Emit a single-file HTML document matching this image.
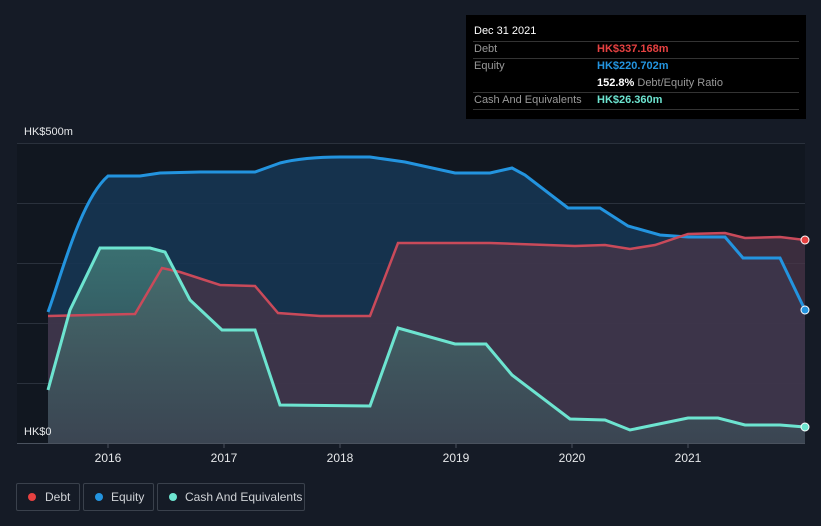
<html><body style="margin:0;width:821px;height:526px;background:#151b26;font-family:'Liberation Sans',sans-serif;overflow:hidden;position:relative">
<svg width="821" height="526" style="position:absolute;left:0;top:0">
<defs>
<linearGradient id="cg" x1="0" y1="0" x2="0" y2="1"><stop offset="0" stop-color="#4a8a80" stop-opacity="0.7"/><stop offset="1" stop-color="#3a5058" stop-opacity="0.6"/></linearGradient>
</defs>
<rect x="17" y="143" width="788" height="300" fill="#111720"/>
<g stroke="#2a313c" stroke-width="1">
<line x1="17" y1="143.5" x2="805" y2="143.5"/><line x1="17" y1="203.5" x2="805" y2="203.5"/><line x1="17" y1="263.5" x2="805" y2="263.5"/><line x1="17" y1="323.5" x2="805" y2="323.5"/><line x1="17" y1="383.5" x2="805" y2="383.5"/>
</g>
<path d="M48,312 C60,280 80,200 108,176 L140,176 L160,173 L200,172 L255,172 L280,163 C300,158 320,157 340,157 L370,157 L405,162 L455,173 L490,173 L512,168 L525,175 L568,208 L600,208 L628,226 L660,235 L688,237 L725,237 L743,258 L780,258 L805,310 L805,443 L48,443Z" fill="#163552" opacity="0.9"/>
<path d="M48,316 L135,314 L162,268 L180,272 L220,285 L255,286 L278,313 L320,316 L370,316 L398,243 L490,243 L575,246 L605,245 L630,249 L655,245 L688,234 L725,233 L745,238 L780,237 L805,240 L805,443 L48,443Z" fill="#4a3548" opacity="0.75"/>
<path d="M48,390 L70,310 L100,248 L150,248 L165,252 L190,300 L222,330 L255,330 L280,405 L370,406 L398,328 L455,344 L486,344 L512,375 L570,419 L605,420 L630,430 L688,418 L718,418 L745,425 L780,425 L805,427 L805,443 L48,443Z" fill="url(#cg)"/>
<path d="M48,312 C60,280 80,200 108,176 L140,176 L160,173 L200,172 L255,172 L280,163 C300,158 320,157 340,157 L370,157 L405,162 L455,173 L490,173 L512,168 L525,175 L568,208 L600,208 L628,226 L660,235 L688,237 L725,237 L743,258 L780,258 L805,310" fill="none" stroke="#2394df" stroke-width="3"/>
<path d="M48,316 L135,314 L162,268 L180,272 L220,285 L255,286 L278,313 L320,316 L370,316 L398,243 L490,243 L575,246 L605,245 L630,249 L655,245 L688,234 L725,233 L745,238 L780,237 L805,240" fill="none" stroke="#c94a5a" stroke-width="2.5"/>
<path d="M48,390 L70,310 L100,248 L150,248 L165,252 L190,300 L222,330 L255,330 L280,405 L370,406 L398,328 L455,344 L486,344 L512,375 L570,419 L605,420 L630,430 L688,418 L718,418 L745,425 L780,425 L805,427" fill="none" stroke="#6de4d0" stroke-width="3"/>
<circle cx="805" cy="240" r="4" fill="#e64141" stroke="#fff" stroke-width="1"/>
<circle cx="805" cy="310" r="4" fill="#2394df" stroke="#fff" stroke-width="1"/>
<circle cx="805" cy="427" r="4" fill="#6de4d0" stroke="#fff" stroke-width="1"/>
<line x1="17" y1="443.5" x2="805" y2="443.5" stroke="#4a525e"/>
<g stroke="#4a525e"><line x1="108" y1="443" x2="108" y2="448"/><line x1="224" y1="443" x2="224" y2="448"/><line x1="340" y1="443" x2="340" y2="448"/><line x1="456" y1="443" x2="456" y2="448"/><line x1="572" y1="443" x2="572" y2="448"/><line x1="688" y1="443" x2="688" y2="448"/></g>
<g fill="#e6e8ea" font-size="12" text-anchor="middle"><text x="108" y="462">2016</text><text x="224" y="462">2017</text><text x="340" y="462">2018</text><text x="456" y="462">2019</text><text x="572" y="462">2020</text><text x="688" y="462">2021</text></g>
<text x="24" y="135" fill="#e6e8ea" font-size="11">HK$500m</text>
<text x="24" y="435" fill="#e6e8ea" font-size="11">HK$0</text>
</svg>
<div style="position:absolute;left:466px;top:15px;width:340px;height:104px;background:#000;font-size:11px;color:#fff">
<div style="position:absolute;left:8px;top:10px;font-size:11px">Dec 31 2021</div>
<div style="position:absolute;left:7px;right:7px;top:26px;border-top:1px solid #333"></div>
<div style="position:absolute;left:8px;top:28px;color:#999">Debt</div><div style="position:absolute;left:131px;top:28px;color:#e64141;font-weight:bold">HK$337.168m</div>
<div style="position:absolute;left:7px;right:7px;top:43px;border-top:1px solid #333"></div>
<div style="position:absolute;left:8px;top:45px;color:#999">Equity</div><div style="position:absolute;left:131px;top:45px;color:#2394df;font-weight:bold">HK$220.702m</div>
<div style="position:absolute;left:131px;top:62px;color:#999"><b style="color:#fff">152.8%</b> Debt/Equity Ratio</div>
<div style="position:absolute;left:7px;right:7px;top:77px;border-top:1px solid #333"></div>
<div style="position:absolute;left:8px;top:79px;color:#999">Cash And Equivalents</div><div style="position:absolute;left:131px;top:79px;color:#6de4d0;font-weight:bold">HK$26.360m</div>
<div style="position:absolute;left:7px;right:7px;top:94px;border-top:1px solid #333"></div>
</div>
<div style="position:absolute;top:483px;left:16px;height:26px;width:62px;border:1px solid #3a414c;border-radius:2px;font-size:12px;color:#cfd2d6;line-height:26px"><span style="position:absolute;left:11px;top:9px;width:8px;height:8px;border-radius:50%;background:#e64141"></span><span style="position:absolute;left:28px">Debt</span></div>
<div style="position:absolute;top:483px;left:83px;height:26px;width:69px;border:1px solid #3a414c;border-radius:2px;font-size:12px;color:#cfd2d6;line-height:26px"><span style="position:absolute;left:11px;top:9px;width:8px;height:8px;border-radius:50%;background:#2394df"></span><span style="position:absolute;left:27px">Equity</span></div>
<div style="position:absolute;top:483px;left:157px;height:26px;width:146px;border:1px solid #3a414c;border-radius:2px;font-size:12px;color:#cfd2d6;line-height:26px"><span style="position:absolute;left:11px;top:9px;width:8px;height:8px;border-radius:50%;background:#6de4d0"></span><span style="position:absolute;left:27px">Cash And Equivalents</span></div>
</body></html>
